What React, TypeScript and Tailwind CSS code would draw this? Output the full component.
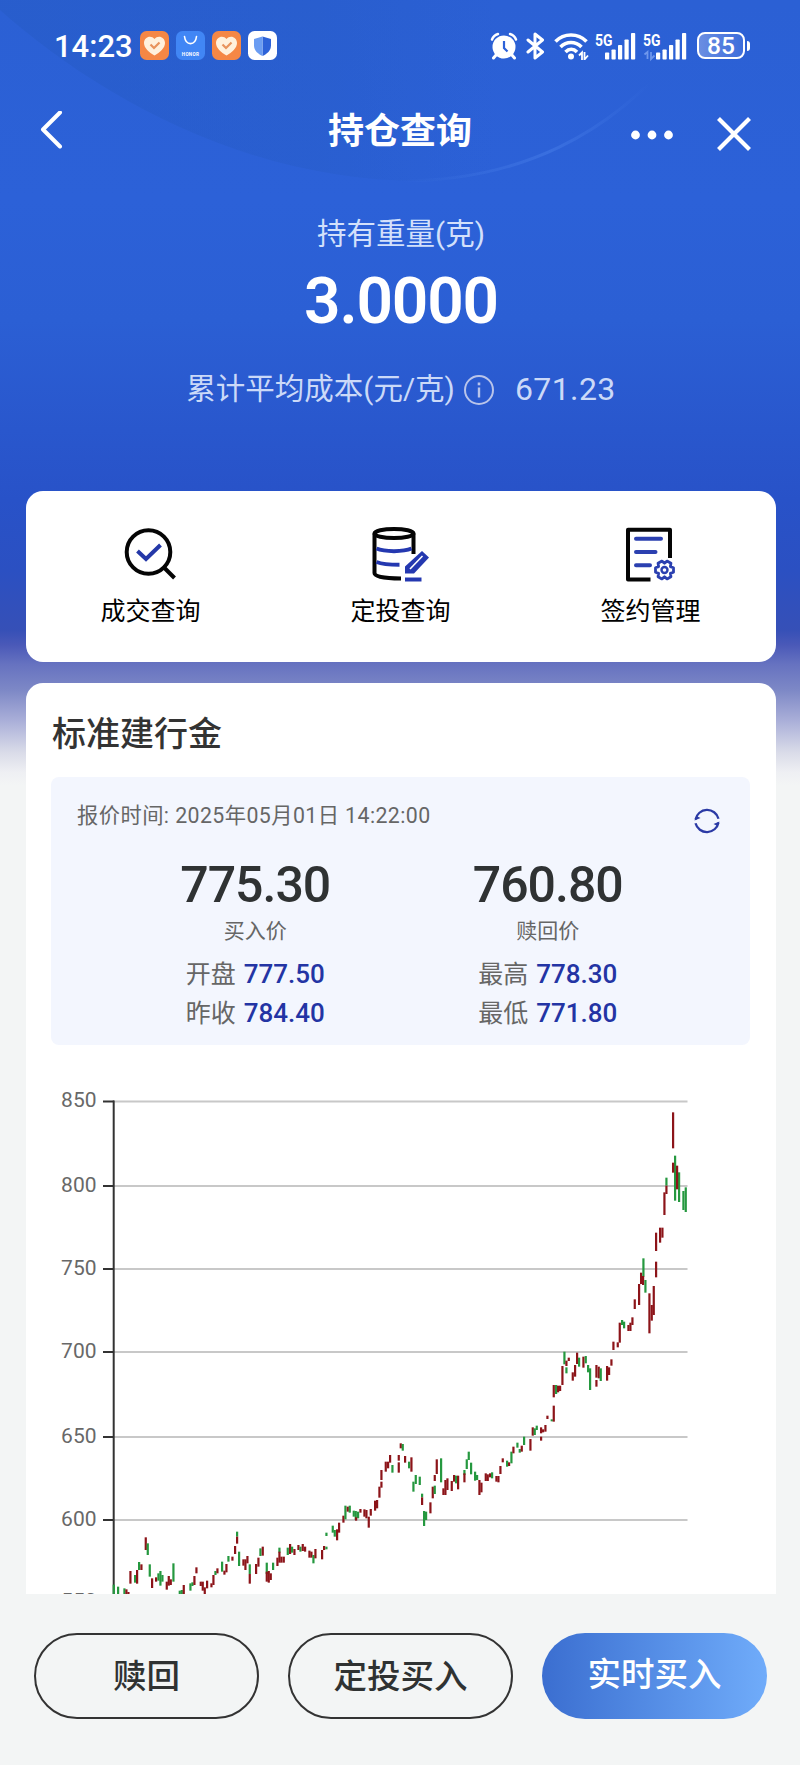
import type { ReactNode } from 'react'

type Tone = 'r' | 'g'
type Bar = [x: number, top: number, bottom: number, tone: Tone]

// Chart units are thirds of a pixel, every segment has its own origin.
const SEGMENTS: { x: number; y: number; bars: Bar[] }[] = [
  {
    x: 0,
    y: 870,
    bars: [
      [221, 644, 676, 'g'], [234, 650, 676, 'g'], [253, 655, 676, 'g'], [259, 658, 676, 'r'],
      [265, 666, 676, 'r'], [271, 603, 641, 'r'], [285, 615, 638, 'g'], [291, 600, 641, 'r'],
      [297, 576, 600, 'g'], [304, 583, 600, 'r'], [317, 502, 540, 'r'], [323, 520, 555, 'g'],
      [329, 583, 620, 'g'], [336, 625, 654, 'r'], [348, 622, 635, 'r'], [355, 610, 632, 'g'],
      [361, 603, 647, 'g'], [367, 615, 635, 'g'], [380, 635, 659, 'r'], [386, 618, 647, 'r'],
      [392, 628, 645, 'r'], [400, 580, 635, 'g'], [419, 662, 676, 'g'], [425, 660, 676, 'g'],
      [431, 645, 676, 'r'], [451, 640, 662, 'g'], [457, 637, 648, 'g'], [463, 618, 645, 'r'],
      [469, 592, 610, 'r'], [482, 635, 648, 'r'], [488, 635, 662, 'r'], [494, 652, 672, 'r'],
      [501, 632, 655, 'r'], [514, 640, 652, 'r'], [520, 615, 645, 'r'], [526, 603, 615, 'g'],
      [532, 595, 610, 'r'], [546, 575, 605, 'g'], [553, 602, 614, 'r'], [559, 582, 607, 'r'],
      [565, 558, 575, 'g'], [577, 560, 572, 'r'], [585, 528, 552, 'r'], [591, 485, 500, 'g'],
      [591, 500, 521, 'r'], [597, 545, 588, 'g'], [610, 568, 587, 'r'], [616, 568, 600, 'r'],
      [622, 558, 580, 'r'], [629, 583, 612, 'g'], [629, 612, 641, 'r'], [648, 582, 612, 'r'],
      [655, 563, 590, 'r'], [661, 535, 558, 'g'], [668, 530, 557, 'r'], [680, 578, 612, 'g'],
      [680, 605, 635, 'r'], [686, 603, 638, 'r'], [692, 610, 630, 'r'], [699, 578, 600, 'g'],
      [712, 563, 588, 'r'], [718, 533, 548, 'g'], [718, 545, 578, 'r'], [724, 560, 578, 'r'],
      [731, 560, 578, 'r'], [743, 533, 555, 'g'], [750, 522, 552, 'r'], [756, 530, 548, 'g'],
      [763, 537, 555, 'r'], [775, 525, 540, 'r'], [781, 530, 545, 'g'], [788, 522, 543, 'r'],
      [795, 530, 545, 'r'], [808, 542, 563, 'r'], [814, 545, 563, 'r'], [820, 555, 580, 'g'],
      [826, 537, 565, 'r'], [846, 540, 568, 'r'], [852, 528, 540, 'r'], [859, 488, 498, 'g'],
      [859, 530, 538, 'g'], [878, 467, 488, 'g'], [884, 480, 500, 'g'], [891, 478, 511, 'r'],
      [897, 458, 488, 'r'],
    ],
  },
  {
    x: 900,
    y: 720,
    bars: [
      [10, 587, 608, 'r'], [16, 557, 598, 'g'], [23, 560, 575, 'r'], [29, 557, 578, 'g'],
      [41, 572, 590, 'g'], [47, 573, 600, 'g'], [54, 575, 595, 'g'], [48, 592, 602, 'r'],
      [61, 567, 578, 'r'], [73, 568, 590, 'r'], [79, 570, 595, 'r'], [86, 590, 623, 'r'],
      [92, 567, 587, 'r'], [105, 542, 572, 'r'], [111, 540, 565, 'r'], [118, 500, 533, 'r'],
      [124, 485, 503, 'r'], [124, 450, 480, 'r'], [137, 425, 455, 'r'], [144, 425, 445, 'r'],
      [150, 405, 428, 'r'], [157, 435, 458, 'g'], [176, 405, 422, 'r'], [176, 427, 458, 'r'],
      [182, 370, 385, 'r'], [188, 372, 392, 'g'], [195, 408, 428, 'r'], [207, 425, 445, 'g'],
      [214, 412, 455, 'r'], [220, 485, 515, 'g'], [227, 465, 492, 'g'], [239, 470, 495, 'g'],
      [246, 521, 532, 'g'], [246, 532, 555, 'r'], [252, 573, 618, 'g'], [258, 575, 600, 'g'],
      [271, 547, 580, 'r'], [278, 500, 535, 'r'], [284, 497, 522, 'g'], [284, 465, 483, 'r'],
      [290, 418, 462, 'r'], [303, 415, 487, 'g'], [310, 505, 525, 'r'], [316, 480, 525, 'r'],
      [322, 475, 510, 'r'], [335, 483, 513, 'r'], [342, 465, 485, 'r'], [348, 467, 490, 'g'],
      [354, 467, 508, 'r'], [373, 450, 465, 'g'], [373, 460, 487, 'r'], [380, 418, 447, 'g'],
      [386, 395, 420, 'g'], [393, 428, 463, 'g'], [405, 455, 482, 'g'], [411, 465, 480, 'g'],
      [418, 480, 525, 'r'], [424, 488, 517, 'r'], [437, 460, 483, 'r'], [443, 463, 483, 'r'],
      [450, 460, 472, 'r'], [456, 457, 475, 'g'], [469, 468, 485, 'r'], [475, 468, 487, 'r'],
      [481, 438, 462, 'r'], [488, 415, 427, 'r'], [501, 422, 440, 'g'], [507, 427, 438, 'r'],
      [514, 395, 430, 'g'], [520, 380, 400, 'r'], [532, 368, 383, 'g'], [539, 387, 398, 'g'],
      [545, 377, 395, 'r'], [552, 350, 375, 'g'], [571, 357, 392, 'r'], [578, 322, 347, 'r'],
      [584, 325, 345, 'g'], [590, 317, 330, 'g'], [603, 322, 340, 'r'], [603, 350, 362, 'r'],
      [609, 328, 337, 'r'], [616, 315, 335, 'r'], [622, 287, 297, 'r'], [635, 298, 304, 'g'],
      [641, 257, 305, 'r'], [641, 195, 232, 'r'], [648, 195, 222, 'g'], [654, 197, 217, 'r'],
      [660, 197, 213, 'r'], [667, 138, 195, 'r'], [673, 95, 133, 'g'], [679, 122, 138, 'r'],
      [679, 142, 160, 'g'], [686, 113, 123, 'r'], [698, 157, 182, 'r'], [705, 135, 170, 'r'],
      [711, 98, 132, 'r'], [717, 113, 140, 'g'], [730, 110, 143, 'r'], [737, 108, 130, 'g'],
    ],
  },
  {
    x: 1380,
    y: 0,
    bars: [
      [264, 855, 877, 'g'], [270, 865, 930, 'g'], [289, 855, 893, 'r'], [289, 900, 920, 'r'],
      [296, 860, 895, 'r'], [302, 865, 903, 'g'], [321, 858, 902, 'r'], [327, 862, 885, 'r'],
      [334, 838, 857, 'r'], [340, 785, 810, 'r'], [353, 787, 802, 'r'], [359, 728, 788, 'r'],
      [366, 720, 735, 'g'], [372, 725, 745, 'g'], [385, 735, 753, 'r'], [391, 728, 753, 'r'],
      [397, 712, 735, 'r'], [404, 658, 687, 'r'], [417, 612, 675, 'r'], [423, 578, 612, 'r'],
      [430, 535, 590, 'g'], [429, 588, 615, 'r'], [436, 600, 638, 'g'], [448, 640, 760, 'r'],
      [455, 675, 722, 'r'], [461, 618, 705, 'r'], [468, 545, 592, 'r'], [468, 458, 513, 'r'],
      [480, 443, 488, 'r'], [487, 443, 473, 'r'], [493, 337, 405, 'r'], [499, 293, 317, 'g'],
      [499, 317, 342, 'r'], [519, 97, 205, 'r'], [525, 227, 362, 'g'], [519, 248, 278, 'r'],
      [537, 277, 366, 'g'], [531, 257, 328, 'r'], [550, 333, 390, 'g'], [557, 322, 396, 'g'],
    ],
  },
]

const GRID = [
  { label: '850', y: 21.5 },
  { label: '800', y: 106 },
  { label: '750', y: 189 },
  { label: '700', y: 272 },
  { label: '650', y: 357 },
  { label: '600', y: 440 },
  { label: '550', y: 522.5 },
]

export default function App() {
  return (
    <div className="relative flex h-[1765px] w-[800px] flex-col overflow-hidden bg-[#f3f5f5] bg-[linear-gradient(180deg,#2b60d4_0px,#2c61d8_200px,#2b5fd4_320px,#2957cd_430px,#2852c8_500px,#2b50c2_570px,#3650b7_630px,#4a59b8_645px,#6672c0_664px,#7d88c6_690px,#a9aed8_720px,#d9dbe8_752px,#eeeff3_772px,#f3f5f5_785px)] font-['Roboto','Noto_Sans_CJK_SC',sans-serif]">
      <HeaderArc />
      <StatusBar />

      {/* Title bar */}
      <div className="relative flex h-[80px] items-center justify-between pl-[39px] pr-[48px]">
        <svg className="h-[40px] w-[24px]" viewBox="0 0 24 40" fill="none" stroke="#fff" strokeWidth="4" strokeLinecap="round" strokeLinejoin="round">
          <path d="M21 1.500 4 18.500l17 17" />
        </svg>
        <h1 className="absolute inset-x-0 top-[21px] text-center text-[36px] font-bold leading-[40px] text-white">
          持仓查询
        </h1>
        <div className="flex items-center gap-[42px] pt-[7px]">
          <svg className="h-[10px] w-[44px]" viewBox="0 0 44 10" fill="#fff">
            <circle cx="5.5" cy="5" r="4.4" />
            <circle cx="22" cy="5" r="4.4" />
            <circle cx="38.5" cy="5" r="4.4" />
          </svg>
          <svg className="h-[36px] w-[36px]" viewBox="0 0 36 36" fill="none" stroke="#fff" strokeWidth="4.2">
            <path d="M2.500 1.500l31 31M33.500 1.500l-31 31" />
          </svg>
        </div>
      </div>

      {/* Holding summary */}
      <div className="relative flex flex-col items-center pl-[2px]">
        <div className="mt-[41px] text-[29.5px] leading-[44px] text-[#d3e0fb]">持有重量(克)</div>
        <div className="mt-[11px] text-[64px] font-semibold leading-[70px] tracking-[-1.2px] text-white">
          3.0000
        </div>
        <div className="mt-[30px] flex items-center text-[29.5px] leading-[44px] text-[#cbd9f8]">
          <span>累计平均成本(元/克)</span>
          <svg className="ml-[8px] mt-[2px] h-[32px] w-[32px]" viewBox="0 0 32 32" fill="none" stroke="#b9c4ea" strokeWidth="2">
            <circle cx="16" cy="16" r="14" />
            <path d="M16 13.500v10" strokeWidth="2.4" />
            <path d="M16 8.500v2.800" strokeWidth="2.6" />
          </svg>
          <span className="ml-[20px] text-[32px] tracking-[.4px]">671.23</span>
        </div>
      </div>

      {/* Shortcuts */}
      <div className="relative ml-[26px] mr-[24px] mt-[80px] grid h-[171px] grid-cols-3 rounded-[17px] bg-white">
        <Shortcut label="成交查询">
          <circle cx="26.500" cy="27" r="21.800" />
          <path d="M41 41.500l11.500 11.500" />
          <path d="M15.500 26l8.500 8 14.500-14" stroke="#2438a8" />
        </Shortcut>
        <Shortcut label="定投查询">
          <ellipse cx="22" cy="8.500" rx="19.500" ry="4.600" />
          <path d="M2.500 8.500v39.500c0 3.500 8 5.500 26.500 5.500M41.500 8.500v20.500" />
          <g stroke="#2438b0">
            <path d="M4.500 23.500c8 3.500 27 3.500 35 0M4.500 37c5 2 12 2.800 23 2.800" />
            <path d="M50 26l7 6.500-15 16h-9v-7z" fill="#2438b0" stroke="none" />
            <path d="M38 44l12.500-13" stroke="#fff" strokeWidth="1.600" />
            <path d="M33 54.500h16.500" />
          </g>
        </Shortcut>
        <Shortcut label="签约管理">
          <path d="M48 33V4.700H6V54.500H28.500" strokeLinejoin="round" />
          <g stroke="#2b40b0" strokeLinecap="round">
            <path d="M14 13.700h25M14 27h19.500M14 40.300h14" />
            <path
              d="M9-2.250V2.250L5.900 3.400L6.450 6.670L2.550 8.920L0 6.800L-2.550 8.920L-6.450 6.670L-5.900 3.400L-9 2.250V-2.250L-5.900-3.400L-6.450-6.670L-2.550-8.920L0-6.800L2.550-8.920L6.450-6.670L5.900-3.400z"
              transform="translate(42.500 45)"
              strokeWidth="2.800"
              strokeLinejoin="round"
            />
            <circle cx="42.500" cy="45" r="3" strokeWidth="2.400" />
          </g>
        </Shortcut>
      </div>

      {/* Quote card */}
      <div className="relative ml-[26px] mr-[24px] mt-[21px] flex min-h-0 flex-1 flex-col overflow-hidden rounded-t-[17px] bg-white">
        <h2 className="ml-[26px] mt-[27px] text-[34px] font-medium leading-[48px] text-[#333]">标准建行金</h2>
        <div className="ml-[25px] mr-[26px] mt-[19px] h-[268px] shrink-0 rounded-[8px] bg-[#f3f6fe]">
          <div className="flex h-[64px] items-start justify-between pl-[26px] pr-[29px]">
            <span className="mt-[22px] text-[21.300px] leading-[34px] tracking-[.42px] text-[#666]">
              报价时间: 2025年05月01日 14:22:00
            </span>
            <svg className="mt-[30px] h-[28px] w-[28px]" viewBox="0 0 28 28" fill="none" stroke="#2b3aa5" strokeWidth="2.300">
              <path d="M2.500 12.500a11.800 11.800 0 0 1 23-.8M25.500 15.500a11.800 11.800 0 0 1-23 .8" />
              <path d="M1.500 13.500l6-2.500-4-2zM26.500 14.500l-6 2.500 4 2z" fill="#2b3aa5" stroke="none" />
            </svg>
          </div>
          <div className="grid grid-cols-2 pl-[58px] pr-[56px]">
            <Quote value="775.30" label="买入价" rows={[['开盘', '777.50'], ['昨收', '784.40']]} />
            <Quote value="760.80" label="赎回价" rows={[['最高', '778.30'], ['最低', '771.80']]} />
          </div>
        </div>
        <PriceChart />
      </div>

      {/* Actions */}
      <div className="relative flex h-[171px] shrink-0 justify-center gap-[29px] bg-[#f3f5f5] pl-px pt-[39px]">
        <button className="h-[86px] w-[225px] rounded-full border-2 border-[#333] pt-[3px] text-[33.5px] font-medium text-[#2f3232]">
          赎回
        </button>
        <button className="h-[86px] w-[225px] rounded-full border-2 border-[#333] pt-[3px] text-[33.5px] font-medium text-[#2f3232]">
          定投买入
        </button>
        <button className="h-[86px] w-[225px] rounded-full bg-gradient-to-r from-[#3b6ed0] to-[#70acfa] pb-px text-[33.5px] font-medium text-white">
          实时买入
        </button>
      </div>
    </div>
  )
}

function HeaderArc() {
  return (
    <svg className="absolute left-0 top-0" width="800" height="240" viewBox="0 0 800 240" fill="none">
      <defs>
        <linearGradient id="arc-fill" x1="0" x2="800" y1="0" y2="0" gradientUnits="userSpaceOnUse">
          <stop offset="0" stopColor="#265bc6" stopOpacity=".55" />
          <stop offset=".4" stopColor="#265bc6" stopOpacity=".4" />
          <stop offset=".62" stopColor="#265bc6" stopOpacity="0" />
        </linearGradient>
        <linearGradient id="arc-line" x1="400" x2="650" y1="0" y2="0" gradientUnits="userSpaceOnUse">
          <stop offset="0" stopColor="#4a80ea" stopOpacity="0" />
          <stop offset=".6" stopColor="#4a80ea" stopOpacity=".45" />
          <stop offset="1" stopColor="#4a80ea" stopOpacity="0" />
        </linearGradient>
      </defs>
      <path d="M0 10C90 90 240 181 420 181C530 181 610 135 680 50L700 0H0z" fill="url(#arc-fill)" />
      <path d="M400 181C520 181 610 135 680 50" stroke="url(#arc-line)" strokeWidth="3" />
    </svg>
  )
}

function StatusBar() {
  return (
    <div className="relative flex h-[91px] shrink-0 items-center justify-between pl-[54px] pr-[50px] text-white">
      <div className="flex items-center">
        <span className="w-[86px] pt-[2px] text-[31px] font-medium leading-[36px]">14:23</span>
        <div className="flex gap-[7px]">
          <HeartBadge />
          <svg width="29" height="29" viewBox="0 0 29 29">
            <rect width="29" height="29" rx="6.500" fill="#4186f5" />
            <path d="M8.500 5.500c1.200 9.500 10.800 9.500 12 0" fill="none" stroke="#fff" strokeWidth="1.600" strokeLinecap="round" />
            <text x="14.500" y="24.500" textAnchor="middle" fontSize="4.600" fontWeight="700" letterSpacing=".3" fill="#fff">
              HONOR
            </text>
          </svg>
          <HeartBadge />
          <svg width="29" height="29" viewBox="0 0 29 29">
            <rect width="29" height="29" rx="6.500" fill="#fff" />
            <path d="M14.500 5.500l8.500 2.500v6.500c0 5-4 8.500-8.500 10.500z" fill="#2d62d8" />
            <path d="M14.500 5.500L6 8v6.500c0 5 4 8.500 8.500 10.500z" fill="#6a9cf2" />
          </svg>
        </div>
      </div>

      <div className="flex items-center">
        {/* Alarm */}
        <svg width="28" height="28" viewBox="0 0 28 28" fill="none" stroke="#fff">
          <circle cx="14" cy="15" r="11.500" fill="#fff" stroke="none" />
          <path d="M2 7.500C3 4.500 5 3 8 2M26 7.500c-1-3-3-4.500-6-5.500" strokeWidth="2.400" strokeLinecap="round" />
          <path d="M6.500 22.500L3.500 26M21.500 22.500l3 3.500" strokeWidth="3" strokeLinecap="round" />
          <path d="M14 9v7l3.500 3.500" stroke="#2c61d8" strokeWidth="2.200" />
        </svg>
        {/* Bluetooth */}
        <svg className="ml-[8px]" width="19" height="28" viewBox="0 0 19 28" fill="none" stroke="#fff" strokeWidth="3" strokeLinejoin="round" strokeLinecap="round">
          <path d="M2 8l14.500 12L9 26V2l7.500 6L2 20" />
        </svg>
        {/* Wifi */}
        <svg className="ml-[9px]" width="35" height="28" viewBox="0 0 35 28" fill="none" stroke="#fff" strokeWidth="3.600">
          <path d="M1.500 9.500c8.500-8.700 22.500-8.700 31 0M6.500 15c6-6 15-6 21 0M11.500 20c3.500-3.500 8-3.500 11.500 0" />
          <circle cx="17" cy="24.500" r="3" fill="#fff" stroke="none" />
          <path d="M25 23.500l3-3v7.500M30.500 20v7.500l3.500-4" strokeWidth="1.800" />
        </svg>
        <Signal className="ml-[6px]" gap={10} />
        <Signal className="ml-[7px]" gap={13} dim />
        {/* Battery */}
        <div className="ml-[10px] flex items-center gap-[2px]">
          <div className="flex h-[27px] w-[48px] items-center justify-center rounded-[8px] border-2 border-white bg-linear-to-r from-[#6a8ee2] to-[#3d6ddb] pt-[1px] text-[24.5px] font-medium leading-none">
            85
          </div>
          <div className="h-[10px] w-[3px] rounded-r-full bg-white" />
        </div>
      </div>
    </div>
  )
}

function HeartBadge() {
  return (
    <svg width="29" height="29" viewBox="0 0 29 29">
      <rect width="29" height="29" rx="6.500" fill="#f58745" />
      <path d="M14.500 24.500C9 21.500 4 17 4 12c0-6 7-8.500 10.500-4C18 3.500 25 6 25 12c0 5-5 9.500-10.500 12.500z" fill="#fff1dc" />
      <path d="M10.500 13.500l3.500 3.500 5.500-5.500" fill="none" stroke="#e8935c" strokeWidth="2.200" />
    </svg>
  )
}

function Signal({ className, gap, dim }: { className: string; gap: number; dim?: boolean }) {
  const bars = [7, 10, 14.5, 20, 26.5]
  return (
    <svg className={`overflow-visible ${className}`} width={gap + 31} height="28" viewBox={`0 0 ${gap + 31} 28`}>
      <text x="0" y="13.500" fontSize="17" fontWeight="700" textLength="17.500" lengthAdjust="spacingAndGlyphs" fill="#fff">
        5G
      </text>
      {dim && (
        <path d="M1.500 22.500l3-2.500v7M8 20v7l3.500-3.500" fill="none" stroke="#6f97ec" strokeWidth="1.800" />
      )}
      {bars.map((h, i) => (
        <rect key={h} x={gap + i * 6.5} y={27.5 - h} width="4.200" height={h} rx=".8" fill="#fff" />
      ))}
    </svg>
  )
}

function Shortcut({ label, children }: { label: string; children: ReactNode }) {
  return (
    <div className="flex flex-col items-center pt-[34px]">
      <svg width="58" height="58" viewBox="0 0 58 58" fill="none" stroke="#050505" strokeWidth="4">
        {children}
      </svg>
      <span className="mt-[11px] pr-px text-[25px] leading-[36px] text-black">{label}</span>
    </div>
  )
}

function Quote({ value, label, rows }: { value: string; label: string; rows: [string, string][] }) {
  return (
    <div className="flex flex-col items-center">
      <div className="mt-[16px] text-[50px] font-medium leading-[56px] tracking-[-1px] text-[#2f3233]">
        {value}
      </div>
      <div className="mt-[3px] text-[21px] leading-[30px] text-[#666]">{label}</div>
      <div className="mt-[9px]">
        {rows.map(([name, price]) => (
          <div key={name} className="flex h-[38.5px] items-baseline gap-[8px] text-[25px] leading-[38px]">
            <span className="text-[#666]">{name}</span>
            <span className="text-[26px] font-medium text-[#2334a4]">{price}</span>
          </div>
        ))}
      </div>
    </div>
  )
}

function PriceChart() {
  return (
    <svg className="ml-[14px] mt-[35px] shrink-0" width="700" height="540" viewBox="0 0 700 540">
      {GRID.map(({ label, y }) => (
        <g key={label}>
          <path d={`M74 ${y}H647.5`} stroke="#c8c8c8" strokeWidth="2" />
          <path d={`M63 ${y}H74`} stroke="#333" strokeWidth="2" />
          <text x="56.500" y={y + 5.5} textAnchor="end" fontSize="21" fill="#686868">
            {label}
          </text>
        </g>
      ))}
      <path d="M73.700 20.500V540" stroke="#333" strokeWidth="2" />
      <g transform="scale(.33333)">
        {SEGMENTS.map((segment) =>
          segment.bars.map(([x, top, bottom, tone], i) => (
            <rect
              key={`${segment.x}-${i}`}
              x={segment.x + x - 3}
              y={segment.y + top}
              width="6.600"
              height={bottom - top}
              fill={tone === 'r' ? '#8c1419' : '#25983f'}
            />
          )),
        )}
      </g>
    </svg>
  )
}
